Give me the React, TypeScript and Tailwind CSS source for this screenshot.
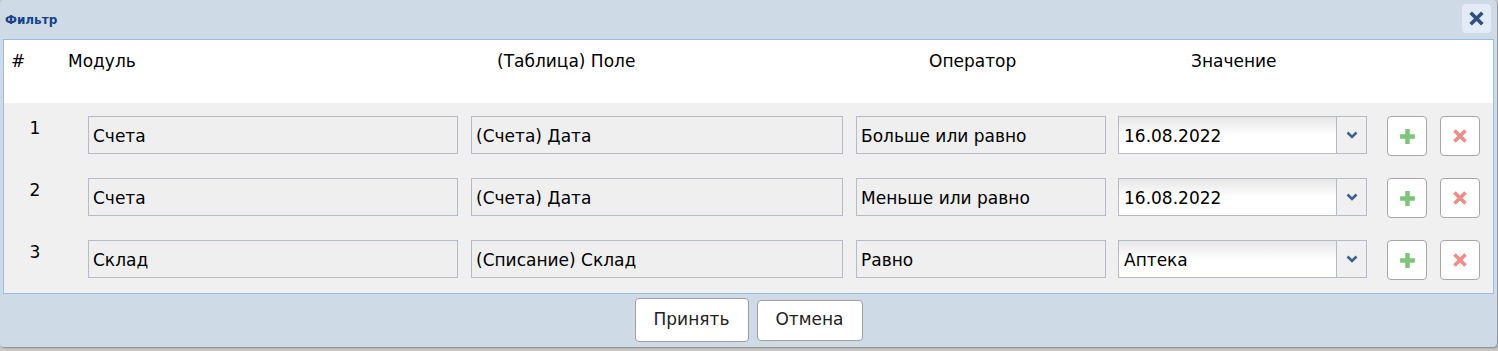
import { Fragment } from "react";

const rows = [
  { n: 1, module: "Счета", field: "(Счета) Дата", op: "Больше или равно", value: "16.08.2022" },
  { n: 2, module: "Счета", field: "(Счета) Дата", op: "Меньше или равно", value: "16.08.2022" },
  { n: 3, module: "Склад", field: "(Списание) Склад", op: "Равно", value: "Аптека" },
];

function Chevron() {
  return (
    <svg width="12" height="8" viewBox="0 0 12 8">
      <path d="M1.5 1.5 L6 6 L10.5 1.5" fill="none" stroke="#3f6191" strokeWidth="2.6" />
    </svg>
  );
}

function PlusIcon() {
  return (
    <svg width="17" height="17" viewBox="0 0 16 16">
      <path d="M8 1 V15 M1 8 H15" stroke="#7cc57b" strokeWidth="4.2" />
    </svg>
  );
}

function CrossIcon({ color, size, width }: { color: string; size: number; width: number }) {
  return (
    <svg width={size} height={size} viewBox="0 0 16 16">
      <path d="M2.5 2.5 L13.5 13.5 M13.5 2.5 L2.5 13.5" stroke={color} strokeWidth={width} />
    </svg>
  );
}

function FilterRow({ r }: { r: (typeof rows)[number] }) {
  return (
    <div className="flex items-start h-[38px]">
      <div className="w-[62px] text-center">{r.n}</div>
      <div className="ml-[22px] w-[370px] h-[38px] flex items-center px-[4px] pt-[3px] border border-[#b6bac9] bg-[#efefef]">
        {r.module}
      </div>
      <div className="ml-[13px] w-[372px] h-[38px] flex items-center px-[4px] pt-[3px] border border-[#b6bac9] bg-[#efefef]">
        {r.field}
      </div>
      <div className="ml-[13px] w-[250px] h-[38px] flex items-center px-[4px] pt-[3px] border border-[#b6bac9] bg-[#efefef]">
        {r.op}
      </div>
      <div className="ml-[12px] w-[249px] h-[38px] flex border border-[#b6bac9]">
        <div className="flex-1 flex items-center px-[5px] pt-[3px] bg-gradient-to-b from-[#e6e6e6] via-white to-white">
          {r.value}
        </div>
        <div className="w-[30px] flex items-center justify-center border-l border-[#b6bac9] bg-[#f0f0f0]">
          <Chevron />
        </div>
      </div>
      <button className="ml-[20px] w-[40px] h-[40px] flex items-center justify-center bg-white border border-[#a7a7a7] rounded-[4px]">
        <PlusIcon />
      </button>
      <button className="ml-[13px] w-[40px] h-[40px] flex items-center justify-center bg-white border border-[#a7a7a7] rounded-[4px]">
        <CrossIcon color="#f08c86" size={16} width={3.6} />
      </button>
    </div>
  );
}

export default function App() {
  return (
    <div className="w-[1498px] h-[351px] bg-[#c9c9c9] overflow-hidden text-[17px] text-black [font-family:'DejaVu_Sans',sans-serif]">
      <div className="w-[1497px] h-[347px] bg-[#cfdae7] rounded-[4px] shadow-[1px_1px_2px_rgba(0,0,0,0.35)] flex flex-col">
        {/* Заголовок */}
        <div className="h-[39px] flex items-center justify-between pl-[5px] pr-[6px]">
          <span className="text-[12px] font-bold text-[#15428b]">Фильтр</span>
          <button className="w-[29px] h-[29px] -mt-[2px] rounded-[4px] bg-[#e2ebf6] flex items-center justify-center">
            <CrossIcon color="#2f4f7f" size={17} width={3.4} />
          </button>
        </div>

        {/* Таблица условий */}
        <div className="mx-[3px] h-[255px] border border-[#99bbe8] flex flex-col">
          <div className="h-[63px] bg-white flex pt-[9px]">
            <span className="ml-[7px] w-[57px]">#</span>
            <span className="w-[429px]">Модуль</span>
            <span className="w-[432px]">(Таблица) Поле</span>
            <span className="w-[262px]">Оператор</span>
            <span>Значение</span>
          </div>
          <div className="flex-1 bg-[#f0f0f0] pt-[13px] flex flex-col gap-[24px]">
            {rows.map((r) => (
              <Fragment key={r.n}>
                <FilterRow r={r} />
              </Fragment>
            ))}
          </div>
        </div>

        {/* Кнопки */}
        <div className="flex-1 flex items-center justify-center gap-[8px] pb-[1px] text-[#222]">
          <button className="w-[114px] h-[44px] bg-white border border-[#9f9f9f] rounded-[4px] text-[17px]">
            Принять
          </button>
          <button className="w-[106px] h-[41px] bg-white border border-[#9f9f9f] rounded-[4px] text-[17px]">
            Отмена
          </button>
        </div>
      </div>
    </div>
  );
}
